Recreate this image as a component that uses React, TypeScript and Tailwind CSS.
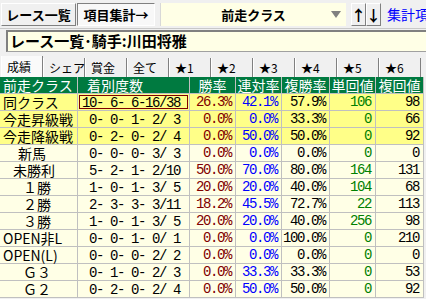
import React from "react";

const jp = { fontFamily: '"Noto Sans CJK JP", sans-serif' };
const mono = { fontFamily: '"Liberation Mono", "Noto Sans CJK JP", monospace' };

type Row = {
  label: string;
  pad: string;
  hi: boolean;
  rec: string;
  win: string;
  ren: string;
  fuku: string;
  tan: string;
  fk: string;
};

const rows: Row[] = [
  { label: "同クラス", pad: "pl-[3px]", hi: true, rec: "10- 6- 6-16/38", win: "26.3%", ren: "42.1%", fuku: "57.9%", tan: "106", fk: "98" },
  { label: "今走昇級戦", pad: "pl-[3px]", hi: true, rec: " 0- 0- 1- 2/ 3", win: "0.0%", ren: "0.0%", fuku: "33.3%", tan: "0", fk: "66" },
  { label: "今走降級戦", pad: "pl-[3px]", hi: true, rec: " 0- 2- 0- 2/ 4", win: "0.0%", ren: "50.0%", fuku: "50.0%", tan: "0", fk: "92" },
  { label: "新馬", pad: "pl-[18px]", hi: false, rec: " 0- 0- 0- 3/ 3", win: "0.0%", ren: "0.0%", fuku: "0.0%", tan: "0", fk: "0" },
  { label: "未勝利", pad: "pl-[13px]", hi: false, rec: " 5- 2- 1- 2/10", win: "50.0%", ren: "70.0%", fuku: "80.0%", tan: "164", fk: "131" },
  { label: "１勝", pad: "pl-[23px]", hi: false, rec: " 1- 0- 1- 3/ 5", win: "20.0%", ren: "20.0%", fuku: "40.0%", tan: "104", fk: "68" },
  { label: "２勝", pad: "pl-[23px]", hi: false, rec: " 2- 3- 3- 3/11", win: "18.2%", ren: "45.5%", fuku: "72.7%", tan: "22", fk: "113" },
  { label: "３勝", pad: "pl-[23px]", hi: false, rec: " 1- 0- 1- 3/ 5", win: "20.0%", ren: "20.0%", fuku: "40.0%", tan: "256", fk: "98" },
  { label: "OPEN非L", pad: "pl-[3px]", hi: false, rec: " 0- 0- 1- 0/ 1", win: "0.0%", ren: "0.0%", fuku: "100.0%", tan: "0", fk: "210" },
  { label: "OPEN(L)", pad: "pl-[3px]", hi: false, rec: " 0- 0- 0- 2/ 2", win: "0.0%", ren: "0.0%", fuku: "0.0%", tan: "0", fk: "0" },
  { label: "Ｇ３", pad: "pl-[23px]", hi: false, rec: " 0- 1- 0- 2/ 3", win: "0.0%", ren: "33.3%", fuku: "33.3%", tan: "0", fk: "53" },
  { label: "Ｇ２", pad: "pl-[23px]", hi: false, rec: " 0- 2- 0- 2/ 4", win: "0.0%", ren: "50.0%", fuku: "50.0%", tan: "0", fk: "92" },
];

const tabs = ["成績", "シェア", "賞金", "全て", "★1", "★2", "★3", "★4", "★5", "★6"];
const heads = ["勝率", "連対率", "複勝率", "単回値", "複回値"];

function Cell({ bg, className, children, font = mono }: { bg: string; className: string; children: React.ReactNode; font?: React.CSSProperties }) {
  return (
    <div
      className={`h-[17px] border-r border-b border-[#c0c0c0] whitespace-pre leading-[16px] ${bg} ${className}`}
      style={font}
    >
      {children}
    </div>
  );
}

export default function App() {
  return (
    <div className="w-[426px] h-[299px] overflow-hidden bg-[#f0f0f0] text-black" style={jp}>
      {/* top bar */}
      <div className="flex items-start h-[29px] pt-[3px] border-b border-[#c8c8c8] whitespace-nowrap overflow-hidden">
        <div className="shrink-0 ml-[1px] w-[75px] h-[23px] flex items-center justify-center text-[13px] font-bold border border-t-white border-l-white border-b-[#808080] border-r-[#808080] bg-[#f0f0f0]">
          レース一覧
        </div>
        <div className="shrink-0 ml-[1px] w-[78px] h-[23px] flex items-center justify-center text-[13px] font-bold border border-t-[#808080] border-l-[#808080] border-b-white border-r-white bg-[#f8f8f8]">
          項目集計→
        </div>
        <div className="shrink-0 ml-[5px] w-[186px] h-[23px] relative flex items-center justify-center bg-[#ffffe6] border-l border-[#d8d8d8] text-[13px] font-bold">
          前走クラス
          <svg className="absolute right-[5px] top-[8px]" width="10" height="8" viewBox="0 0 10 8">
            <polygon points="0,0 10,0 5,7" fill="#808080" />
          </svg>
        </div>
        <div className="shrink-0 ml-[5px] w-[15px] h-[23px] flex items-center justify-center border border-t-white border-l-white border-b-[#808080] border-r-[#808080] text-[15px] font-bold leading-none">
          ↑
        </div>
        <div className="shrink-0 w-[15px] h-[23px] flex items-center justify-center border border-t-white border-l-white border-b-[#808080] border-r-[#808080] text-[15px] font-bold leading-none">
          ↓
        </div>
        <div className="shrink-0 ml-[6px] h-[23px] flex items-center text-[14px] text-[#0000ff]">集計項目</div>
      </div>

      {/* title */}
      <div className="pl-[6px] pt-[1px]">
        <div className="h-[22px] flex items-center pl-[2px] bg-[#ffffe6] border-t-2 border-l-2 border-b border-t-[#808080] border-l-[#808080] border-b-[#a0a0a0] text-[15px] font-bold whitespace-nowrap">
          レース一覧･騎手:川田将雅
        </div>
      </div>

      {/* tabs */}
      <div className="flex items-end h-[25px] pl-[1px] overflow-hidden">
        {tabs.map((t, i) => (
          <div
            key={t}
            className={`shrink-0 w-[42px] flex items-center pl-[5px] text-[12px] border-l border-r border-l-white border-r-[#808080] whitespace-nowrap ${
              i === 0 ? "h-[21px] bg-[#fafafa]" : "h-[19px] bg-[#f0f0f0]"
            }`}
          >
            {t}
          </div>
        ))}
      </div>

      {/* table */}
      <div className="grid grid-cols-[78px_112px_46px_46px_48px_46px_48px] text-[14px]">
        <Cell bg="bg-[#007a40]" className="text-white pl-[3px]" font={jp}>前走クラス</Cell>
        <Cell bg="bg-[#007a40]" className="text-white pl-[9px]" font={jp}>着別度数</Cell>
        {heads.map((h) => (
          <Cell key={h} bg="bg-[#007a40]" className="text-white text-center" font={jp}>
            {h}
          </Cell>
        ))}
        {rows.map((r, i) => {
          const bg = r.hi ? "bg-[#ffff88]" : "bg-[#ffffe6]";
          const num = "text-[14px] tracking-[-1.4px] text-right pr-[4px]";
          return (
            <React.Fragment key={r.label}>
              <Cell bg={bg} className={`${r.pad} text-[14px]`} font={jp}>
                {r.label}
              </Cell>
              <Cell bg={bg} className="text-[14px] tracking-[-1.4px] p-[1px]">
                <div className={`h-full pl-[2px] leading-[14px] ${i === 0 ? "border border-[#800000]" : "border border-transparent"}`}>
                  {r.rec}
                </div>
              </Cell>
              <Cell bg={bg} className={`${num} text-[#800000]`}>{r.win}</Cell>
              <Cell bg={bg} className={`${num} text-[#0000ff]`}>{r.ren}</Cell>
              <Cell bg={bg} className={num}>{r.fuku}</Cell>
              <Cell bg={bg} className={`${num} text-[#008000]`}>{r.tan}</Cell>
              <Cell bg={bg} className={num}>{r.fk}</Cell>
            </React.Fragment>
          );
        })}
      </div>
    </div>
  );
}
